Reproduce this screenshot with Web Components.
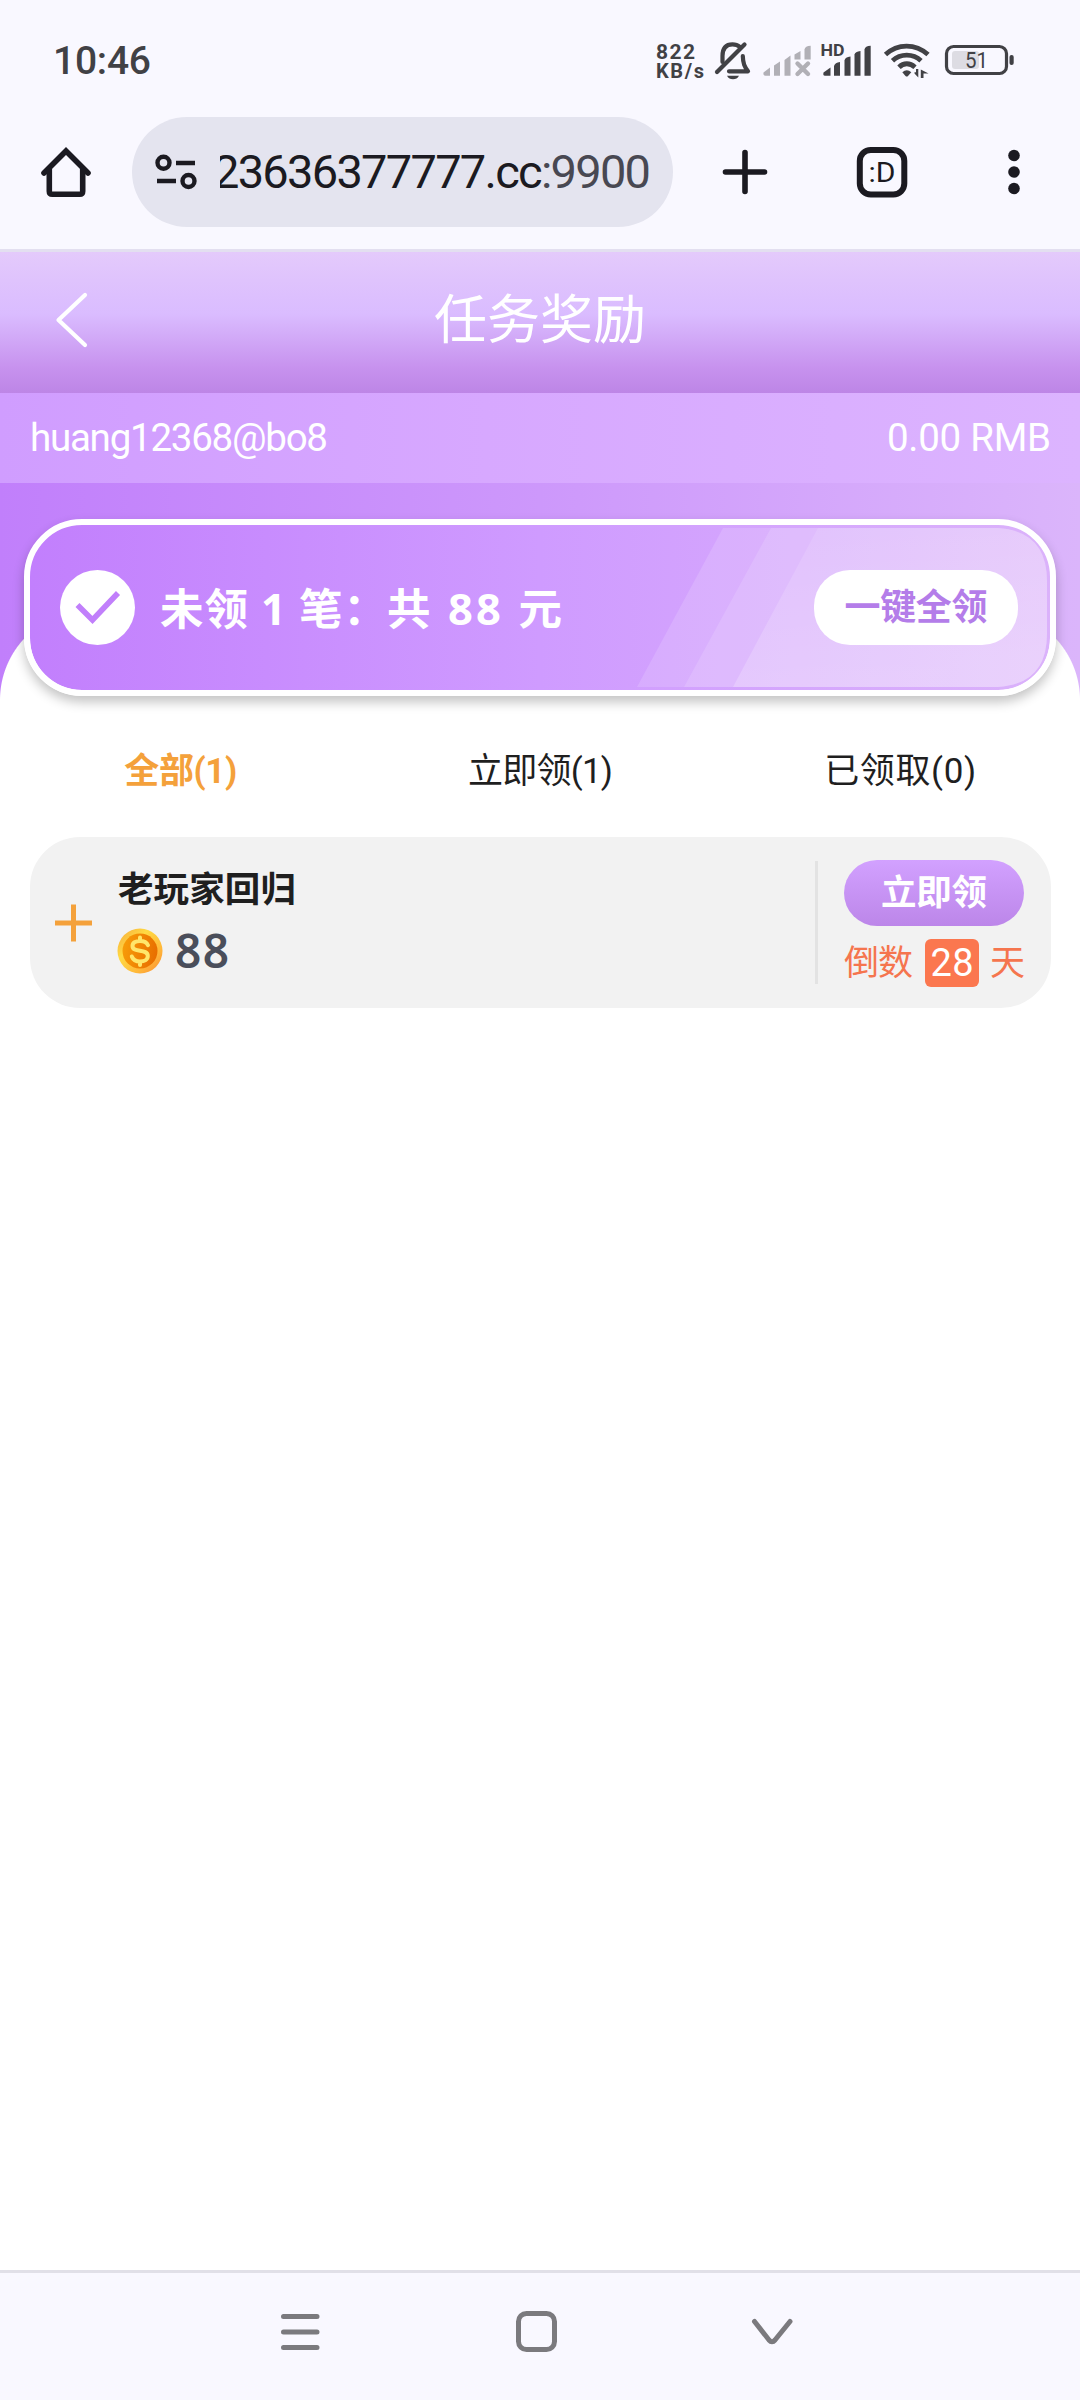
<!DOCTYPE html>
<html lang="zh-CN">
<head>
<meta charset="utf-8">
<title>任务奖励</title>
<style>
html,body{margin:0;padding:0;background:#fff}
body{width:1080px;height:2400px;overflow:hidden;font-family:Roboto,"Noto Sans CJK SC",sans-serif}
</style>
</head>
<body>
<reward-app></reward-app>
<script>
const define = (name, html, ready) => {
  const t = document.createElement('template');
  t.innerHTML = html;
  customElements.define(name, class extends HTMLElement {
    constructor() {
      super();
      this.attachShadow({mode: 'open'}).appendChild(t.content.cloneNode(true));
    }
    connectedCallback() { if (ready) ready.call(this, this.shadowRoot); }
  });
};

/* One line of text tracked out (or in) to a given measure. */
define('fit-text', `<style>
:host{display:block;white-space:nowrap;flex:none}
span{display:block;width:max-content;white-space:pre}
</style><span><slot></slot></span>`, function (root) {
  const w = parseFloat(this.getAttribute('w'));
  const span = root.querySelector('span');
  const n = this.textContent.length;
  this.style.width = w + 'px';
  span.style.letterSpacing = '0px';
  const natural = span.getBoundingClientRect().width;
  if (n > 1) span.style.letterSpacing = ((w - natural) / (n - 1)).toFixed(3) + 'px';
});

define('status-bar', `
<style>
:host{display:flex;height:117px;box-sizing:border-box;padding:0 66px 0 53px;background:#f9f8ff;color:#414145;align-items:flex-start}
.time{font-size:39px;line-height:54px;font-weight:500;margin:34px auto 0 0}
.net{font-size:21px;font-weight:700;line-height:20px;margin:42px 10px 0 0}
.unit{font-size:20px;line-height:19px}
svg{display:block;margin-top:40px;flex:none}
</style>
<fit-text class="time" w="98">10:46</fit-text>
<div class="net"><fit-text w="39">822</fit-text><fit-text class="unit" w="48">KB/s</fit-text></div>
<svg width="300" height="44" viewBox="714 40 300 44" fill="#414145">
  <g fill="none" stroke="#414145" stroke-width="4.2" stroke-linecap="round" stroke-linejoin="round">
    <path d="M717 72L744.500 44.500"/>
    <path d="M722.500 62V56C722.500 47 727 44.300 732.500 44.300C735.500 44.300 738 45.300 740 47"/>
    <path d="M742.800 56C743 63.500 744.500 66.500 748 71.300H729"/>
  </g>
  <path d="M727 75.800H739C737.500 78.700 735.800 79.300 733 79.300S728.500 78.700 727 75.800Z"/>
  <g fill="#b1b0b6">
    <path d="M763.500 72.500L770 67.500V75.800H765.500C763.500 75.800 763.200 74.300 763.500 72.500Z"/>
    <path d="M774 65.500L780 61.500V75.800H774Z"/>
    <path d="M784.500 60L790.500 55.500V75.800H784.500Z"/>
    <path d="M794.500 54.500L800.500 51V59.500H794.500Z"/>
    <path d="M804.500 49.500Q805 46 810.700 45.800V59.500H804.500Z"/>
  </g>
  <path d="M797.500 63.500L808 74M808 63.500L797.500 74" stroke="#b1b0b6" stroke-width="4.400" stroke-linecap="round"/>
  <text x="820.500" y="56" font-family="Roboto" font-weight="700" font-size="16.500" textLength="24" lengthAdjust="spacingAndGlyphs">HD</text>
  <path d="M823.500 72.500L830.500 67.500V75.800H825C823 75.800 823.200 74.300 823.500 72.500Z"/>
  <path d="M834 66Q835 62.500 840 62V75.800H834Z"/>
  <path d="M844.500 60.500Q845 57 850.500 56.500V75.800H844.500Z"/>
  <path d="M854.500 54.500Q855 51.500 860.500 51V75.800H854.500Z"/>
  <path d="M864.500 49.500Q865 46 870.700 45.800V75.800H864.500Z"/>
  <g fill="none" stroke="#414145" stroke-width="4.800">
    <path d="M885.500 54.500C897.500 43.200 915.500 43.200 928 54.500"/>
    <path d="M892.500 60.800C900.500 53.200 913 53.200 921 60.800"/>
    <path d="M899 67.200C903.500 62.600 910 62.600 915 67.200"/>
  </g>
  <path d="M902.300 72.300Q906.800 68 911.300 72.300L908 76Q906.800 77 905.500 76Z"/>
  <path d="M918.300 69V77.500L914.500 73.600V72.200H916V69ZM920.800 78V69.500L928.500 73.600H923.500V78Z"/>
  <rect x="946.500" y="46.500" width="60" height="27" rx="7" fill="none" stroke="#414145" stroke-width="3.200"/>
  <rect x="952" y="51" width="27" height="18" rx="3" fill="#dddce3"/>
  <rect x="1009.500" y="55" width="4.200" height="10" rx="2"/>
  <text x="976.500" y="68" text-anchor="middle" font-family="Roboto" font-weight="400" font-size="22.500" textLength="23" lengthAdjust="spacingAndGlyphs">51</text>
</svg>`);

define('browser-bar', `
<style>
:host{display:flex;height:135px;box-sizing:border-box;border-bottom:3px solid #e3dff0;background:#f9f8ff;align-items:flex-start;color:#1b1a21}
.pill{width:541px;height:110px;border-radius:55px;background:#e4e4ef;display:flex;align-items:center;box-sizing:border-box;padding-left:22px;margin:0 44px 0 36px}
.url{width:440px;margin-left:22px;overflow:hidden;font-size:47px;line-height:64px;display:flex}
.url fit-text{margin-left:-7px}
.port{color:#484852}
svg{display:block;flex:none}
.i{margin-top:26px}
.home{margin-left:38px}
.tab{margin-left:82px;margin-right:95px}
</style>
<svg class="i home" width="58" height="58" viewBox="38 143 58 58" fill="none" stroke="#1b1a21" stroke-width="5.600" stroke-linecap="round" stroke-linejoin="miter">
 <path d="M44 173L66 151L88 173"/><path d="M49.300 169V191.200Q49.300 194.200 52.300 194.200H79.700Q82.700 194.200 82.700 191.200V169"/>
</svg>
<div class="pill">
  <svg width="44" height="38" viewBox="154 153 44 38" fill="none" stroke="#1b1a21" stroke-width="4.400">
    <ellipse cx="163.500" cy="162.800" rx="6" ry="6"/><path d="M176 163H195M157 181H176"/><ellipse cx="188.500" cy="181" rx="6" ry="6"/>
  </svg>
  <div class="url"><fit-text w="438">23636377777.cc<span class="port">:9900</span></fit-text></div>
</div>
<svg class="i" width="56" height="58" viewBox="717 143 56 58" stroke="#1b1a21" stroke-width="5.600" stroke-linecap="round"><path d="M725.500 172H764.500M745 152.500V191.500"/></svg>
<svg class="i tab" width="54" height="58" viewBox="855 143 54 58"><rect x="859.800" y="150" width="44.500" height="44.500" rx="11" fill="none" stroke="#1b1a21" stroke-width="6"/>
<text x="868.500" y="182" font-family="Roboto" font-size="28" fill="#1b1a21" textLength="27" lengthAdjust="spacingAndGlyphs">:D</text></svg>
<svg class="i" width="20" height="58" viewBox="1004 143 20 58" fill="#1b1a21"><circle cx="1014" cy="155.500" r="5.800"/><circle cx="1014" cy="172" r="5.800"/><circle cx="1014" cy="188.500" r="5.800"/></svg>
`);

define('page-header', `
<style>
:host{display:grid;grid-template-columns:1fr auto 1fr;align-items:center;height:141px;padding:0 54px;color:#fff;background:linear-gradient(#e4cafb 0%,#dfc3fd 20%,#dabcff 44%,#c792ee 82%,#bd85e6 100%)}
svg{display:block;margin-bottom:5px}
.t{font-size:53px;line-height:70px;margin-bottom:4px}
</style>
<svg width="36" height="60" viewBox="54.500 291 36 60" fill="none" stroke="#fff" stroke-width="4.200" stroke-linecap="round" stroke-linejoin="round"><path d="M85.500 296L59 321L85.500 346"/></svg>
<fit-text class="t" w="212"><slot></slot></fit-text>`);

define('account-bar', `
<style>
:host{display:flex;justify-content:space-between;align-items:center;height:90px;padding:0 29px 1px 30px;box-sizing:border-box;color:#fff;font-size:38.5px;line-height:50px;background:linear-gradient(90deg,#d09dff,#d7a8ff 45%,#dcb4ff)}
</style>
<fit-text w="298">huang12368@bo8</fit-text><fit-text w="164">0.00 RMB</fit-text>`);

define('claim-banner', `
<style>
:host{display:flex;align-items:center;position:relative;box-sizing:border-box;height:177px;margin:0 24px;border:6px solid #fff;border-radius:58px;padding:0 32px 0 30px;
background:linear-gradient(90deg,#c27ffd,#cf9bff 50%,#dbb2fb);background-clip:padding-box;box-shadow:0 6px 12px rgba(0,0,0,.24);color:#fff}
.shine{position:absolute;inset:0;width:100%;height:100%;z-index:0}
.check,.msg,.btn{position:relative;z-index:1}
.check{display:block;flex:none}
.msg{display:flex;font-family:"Noto Sans","Noto Sans CJK SC",sans-serif;font-size:43.500px;line-height:60px;font-weight:700;margin:0 auto 0 25px}
.btn{width:204px;height:75px;border-radius:36px;background:#fff;color:#b47de9;display:flex;align-items:center;justify-content:center;font-size:36px;font-weight:700;line-height:50px;box-sizing:border-box}
</style>
<svg class="shine" viewBox="30 525 1020 165" preserveAspectRatio="none">
<defs><linearGradient id="g" x1="0" y1="0" x2=".3" y2="1"><stop offset="0" stop-color="#fff" stop-opacity=".09"/><stop offset="1" stop-color="#fff" stop-opacity=".22"/></linearGradient>
<clipPath id="c"><path d="M600 528H998Q1047 531 1047 581V634Q1047 684 998 687H600Z"/></clipPath></defs>
<g clip-path="url(#c)">
<path d="M723 528H1050V687H637Z" fill="#fff" opacity=".14"/>
<path d="M771 528H1050V687H684Z" fill="#fff" opacity=".13"/>
<path d="M818 528H1050V687H733Z" fill="url(#g)"/></g></svg>
<svg class="check" width="75" height="75" viewBox="0 0 75 75"><circle cx="37.500" cy="37.500" r="37.500" fill="#fff"/><path d="M17.500 35L32.500 50L58 23" fill="none" stroke="#c17ffb" stroke-width="5.600"/></svg>
<div class="msg"><fit-text w="227">未领 1 笔：</fit-text><fit-text w="175">共 88 元</fit-text></div>
<div class="btn"><fit-text w="143">一键全领</fit-text></div>`);

define('filter-tabs', `
<style>
:host{display:grid;grid-template-columns:repeat(3,1fr);height:141px;box-sizing:border-box;padding:52px 0 0 1px;color:#1f1f1f;font-size:35px;line-height:48px;justify-items:center}
.on{color:#f4a13b;font-weight:700}
</style>
<fit-text class="on" w="113">全部(1)</fit-text><fit-text w="145">立即领(1)</fit-text><fit-text w="152">已领取(0)</fit-text>`);

define('reward-item', `
<style>
:host{display:flex;align-items:center;height:171px;margin:0 29px 0 30px;border-radius:50px;background:#f2f2f2;box-sizing:border-box;padding:0 26px 0 24px}
svg{display:block;flex:none}
.info{display:flex;flex-direction:column;margin:3px auto 0 23px}
.name{font-size:35.500px;line-height:46px;font-weight:600;color:#1f1f1f;margin-left:1px}
.amt{display:flex;align-items:center;gap:12px;height:62px;margin-top:7px}
.num{font-family:"Noto Sans",sans-serif;font-size:46px;line-height:56px;font-weight:600;color:#4a4e5a;margin-top:-1px}
.act{border-left:3px solid #e3e3e3;height:123px;padding-left:26px;display:flex;flex-direction:column}
.btn{flex:none;width:180px;height:66px;border-radius:33px;background:linear-gradient(#d2a1ff,#bc86e9);display:flex;justify-content:center;align-items:center;color:#fff;font-size:35.500px;font-weight:700;line-height:48px;margin-top:-1px;box-sizing:border-box}
.left{display:flex;align-items:center;margin-top:12px;color:#f5754e;font-size:35px;line-height:48px}
.left>fit-text{margin-top:2px}
.days{width:54px;height:48px;border-radius:6px;background:#fb774f;color:#fff;font-size:38px;line-height:48px;display:flex;justify-content:center;margin:0 11px 0 12px}
</style>
<svg width="40" height="40" viewBox="0 0 40 40" stroke="#f4a13b" stroke-width="5"><path d="M1 20H38M19.500 1.500V38.500"/></svg>
<div class="info">
 <fit-text class="name" w="178">老玩家回归</fit-text>
 <div class="amt">
 <svg width="46" height="46" viewBox="0 0 46 46"><defs>
 <linearGradient id="a" x1="0" y1="0" x2="1" y2="1"><stop offset="0" stop-color="#f6a83c"/><stop offset=".35" stop-color="#ffda43"/><stop offset=".7" stop-color="#ffb83a"/><stop offset="1" stop-color="#fb8a32"/></linearGradient>
 <linearGradient id="b" x1="0" y1=".4" x2="1" y2=".6"><stop offset="0" stop-color="#f79c08"/><stop offset="1" stop-color="#e86d00"/></linearGradient></defs>
 <circle cx="23" cy="23" r="22.500" fill="url(#a)"/><circle cx="23" cy="23" r="17.500" fill="url(#b)"/>
 <path d="M31 17.200C29.500 13.800 26.500 13 23 13C18.500 13 15.500 14.800 15.500 18C15.500 25.500 30.800 20 30.800 28C30.800 31.500 27.500 33.500 23 33.500C18.500 33.500 16 31.800 14.800 28.500M23 9.500V13M23 33.500V37" fill="none" stroke="#ffe66b" stroke-width="4" stroke-linecap="round"/></svg>
 <fit-text class="num" w="54">88</fit-text></div>
</div>
<div class="act"><div class="btn"><fit-text w="106">立即领</fit-text></div>
<div class="left"><fit-text w="69">倒数</fit-text><span class="days"><fit-text w="43">28</fit-text></span><fit-text w="35">天</fit-text></div></div>`);

define('reward-page', `
<style>
:host{display:block;flex:1;background:#fff}
.hero{height:227px;padding-top:36px;box-sizing:border-box;background:radial-gradient(circle at 90px 90px,#fff 89.500px,transparent 90.500px) 0 127px/90px 90px no-repeat,radial-gradient(circle at 0 90px,#fff 89.500px,transparent 90.500px) 990px 127px/90px 90px no-repeat,linear-gradient(#fff,#fff) 90px 127px/900px 100px no-repeat,linear-gradient(#fff,#fff) 0 217px/1080px 10px no-repeat,linear-gradient(90deg,#c17ffb,#cd98fb 50%,#dbb5fb)}
filter-tabs{margin-top:-14px}
</style>
<page-header>任务奖励</page-header>
<account-bar></account-bar>
<div class="hero"><claim-banner></claim-banner></div>
<filter-tabs></filter-tabs>
<reward-item></reward-item>`);

define('nav-bar', `
<style>
:host{display:flex;height:130px;box-sizing:border-box;border-top:3px solid #e1e0e8;background:#f9f8ff;justify-content:center;align-items:flex-start;gap:186px;padding:34px 8px 0 0}
svg{display:block;flex:none;fill:none;stroke:#7b7a7e;stroke-width:5;stroke-linecap:round;stroke-linejoin:round}
</style>
<svg width="50" height="50" viewBox="275 2307 50 50"><path d="M283.500 2316.500H317M283.500 2332H317M283.500 2347.500H317"/></svg>
<svg width="50" height="50" viewBox="511 2307 50 50"><rect x="518.500" y="2313.500" width="36" height="36" rx="8"/></svg>
<svg width="50" height="50" viewBox="746 2307 50 50"><path d="M753.500 2321.500L768 2340Q771 2343.500 774 2340L789 2321.500"/></svg>`);

define('reward-app', `
<style>:host{display:flex;flex-direction:column;width:1080px;height:2400px}</style>
<status-bar></status-bar><browser-bar></browser-bar><reward-page></reward-page><nav-bar></nav-bar>`);
</script>
</body>
</html>
